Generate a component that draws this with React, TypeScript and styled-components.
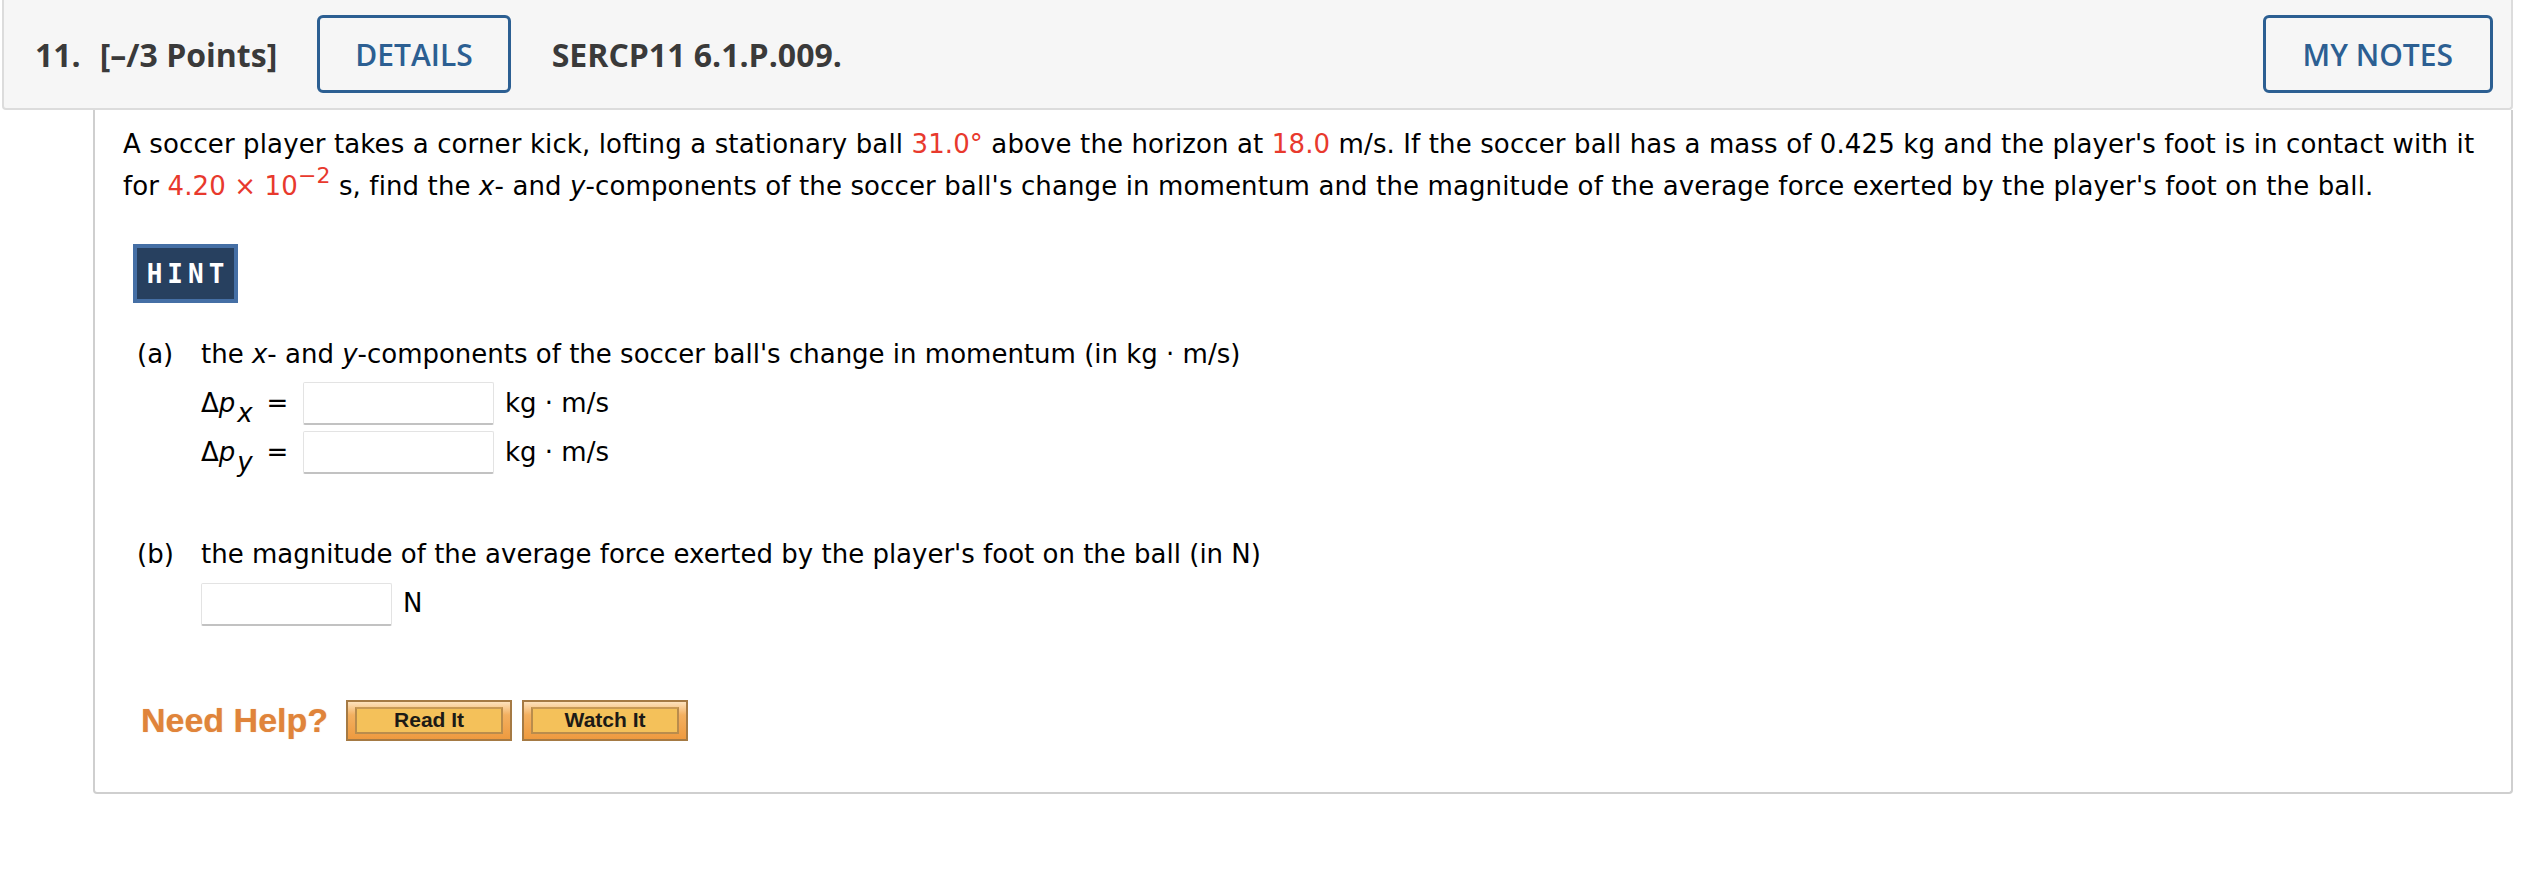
import React from 'react';
import styled, { createGlobalStyle } from 'styled-components';

const GlobalStyle = createGlobalStyle`
  html, body {
    margin: 0;
    padding: 0;
    background: #fff;
  }
`;

const App = () => {
  return (
    <>
      <GlobalStyle />
      <Page>
        <Header>
          <Number>11.</Number>
          <Points>[–/3 Points]</Points>
          <OutlineButton>DETAILS</OutlineButton>
          <Code>SERCP11 6.1.P.009.</Code>
          <Spacer />
          <OutlineButton $wide>MY NOTES</OutlineButton>
        </Header>
        <Panel>
          <Problem>
            A soccer player takes a corner kick, lofting a stationary ball <Red>31.0°</Red> above the horizon
            at <Red>18.0</Red> m/s. If the soccer ball has a mass of 0.425 kg and the player's foot is in contact
            with it for <Red>4.20 × 10<Sup>−2</Sup></Red> s, find the <i>x</i>- and <i>y</i>-components of the
            soccer ball's change in momentum and the magnitude of the average force exerted by the player's foot
            on the ball.
          </Problem>
          <HintButton>HINT</HintButton>

          <Part>
            <PartLabel>(a)</PartLabel>
            <PartBody>
              <PartText>
                the <i>x</i>- and <i>y</i>-components of the soccer ball's change in momentum (in kg · m/s)
              </PartText>
              <AnswerRows>
                <AnswerRow>
                  <Symbol>Δ<i>p</i><Sub>x</Sub></Symbol>
                  <Equals>=</Equals>
                  <AnswerInput type="text" />
                  <Unit>kg · m/s</Unit>
                </AnswerRow>
                <AnswerRow>
                  <Symbol>Δ<i>p</i><Sub>y</Sub></Symbol>
                  <Equals>=</Equals>
                  <AnswerInput type="text" />
                  <Unit>kg · m/s</Unit>
                </AnswerRow>
              </AnswerRows>
            </PartBody>
          </Part>

          <Part $gap={60}>
            <PartLabel>(b)</PartLabel>
            <PartBody>
              <PartText>the magnitude of the average force exerted by the player's foot on the ball (in N)</PartText>
              <AnswerRows>
                <AnswerRow>
                  <AnswerInput type="text" $flush />
                  <Unit>N</Unit>
                </AnswerRow>
              </AnswerRows>
            </PartBody>
          </Part>

          <HelpRow>
            <NeedHelp>Need Help?</NeedHelp>
            <HelpButton><HelpInner>Read It</HelpInner></HelpButton>
            <HelpButton><HelpInner>Watch It</HelpInner></HelpButton>
          </HelpRow>
        </Panel>
      </Page>
    </>
  );
};

const Page = styled.div`
  width: 2526px;
  font-family: 'DejaVu Sans', Verdana, sans-serif;
  color: #000;
`;

const Header = styled.div`
  display: flex;
  align-items: center;
  box-sizing: border-box;
  margin-left: 2px;
  width: 2511px;
  height: 110px;
  padding: 0 18px 0 31px;
  background: #f6f6f6;
  border: 2px solid #dcdcdc;
  border-top: none;
  border-radius: 0 0 4px 4px;
  font-family: 'Open Sans', 'Liberation Sans', sans-serif;
  color: #3a3a3a;
`;

const Number = styled.span`
  font-size: 32px;
  font-weight: 700;
  margin-right: 19px;
`;

const Points = styled.span`
  font-size: 32px;
  font-weight: 700;
  margin-right: 40px;
`;

const Code = styled.span`
  font-size: 32px;
  font-weight: 700;
  margin-left: 41px;
`;

const Spacer = styled.div`
  flex: 1;
`;

const OutlineButton = styled.button<{ $wide?: boolean }>`
  box-sizing: border-box;
  height: 78px;
  padding: 0 ${({ $wide }) => ($wide ? 37 : 35)}px;
  background: transparent;
  border: 3px solid #2c5f92;
  border-radius: 6px;
  color: #2c5f92;
  font-family: 'Open Sans', 'Liberation Sans', sans-serif;
  font-size: 30px;
  font-weight: 600;
  cursor: pointer;
`;

const Panel = styled.div`
  box-sizing: border-box;
  margin-left: 93px;
  width: 2420px;
  padding: 13px 22px 51px 28px;
  border: 2px solid #cfcfcf;
  border-top: none;
  border-radius: 0 0 4px 4px;
  font-size: 26px;
  line-height: 42px;
`;

const Problem = styled.p`
  margin: 0;
  padding-right: 2px;
  letter-spacing: 0.12px;
`;

const Red = styled.span`
  color: #e8392d;
`;

const Sup = styled.sup`
  font-size: 22px;
  line-height: 0;
  vertical-align: 12px;
`;

const HintButton = styled.button`
  display: block;
  box-sizing: border-box;
  margin: 37px 0 0 10px;
  width: 105px;
  height: 59px;
  padding: 0;
  background: #27405f;
  border: 4px solid #456fa5;
  color: #fff;
  font-family: 'DejaVu Sans Mono', monospace;
  font-size: 26px;
  font-weight: 700;
  letter-spacing: 5px;
  text-indent: 5px;
  cursor: pointer;
`;

const Part = styled.div<{ $gap?: number }>`
  display: flex;
  margin: ${({ $gap }) => $gap ?? 30}px 0 0 14px;
`;

const PartLabel = styled.div`
  width: 64px;
  flex-shrink: 0;
`;

const PartBody = styled.div`
  display: flex;
  flex-direction: column;
`;

const PartText = styled.div``;

const AnswerRows = styled.div`
  display: flex;
  flex-direction: column;
  gap: 7px;
  margin-top: 7px;
`;

const AnswerRow = styled.div`
  display: flex;
  align-items: center;
  height: 42px;
`;

const Symbol = styled.span`
  width: 61px;
  white-space: nowrap;
`;

const Sub = styled.sub`
  font-size: 26px;
  font-style: italic;
  line-height: 0;
  vertical-align: -10px;
  margin-left: 2px;
`;

const Equals = styled.span`
  width: 31px;
  text-align: center;
  margin-right: 10px;
`;

const AnswerInput = styled.input<{ $flush?: boolean }>`
  box-sizing: border-box;
  width: 191px;
  height: 43px;
  margin: ${({ $flush }) => ($flush ? '3px 0 0 0' : '0')};
  background: #fff;
  border: 1px solid #e3e3e3;
  border-bottom: 2px solid #c2c2c2;
  border-radius: 2px;
  font-size: 24px;
`;

const Unit = styled.span`
  margin-left: 11px;
`;

const HelpRow = styled.div`
  display: flex;
  align-items: center;
  gap: 10px;
  margin: 75px 0 0 18px;
`;

const NeedHelp = styled.span`
  margin-right: 8px;
  font-family: 'Liberation Sans', Arial, sans-serif;
  font-size: 34px;
  font-weight: 700;
  color: #e0843a;
  text-shadow: 0 0 1px rgba(224, 132, 58, 0.6);
`;

const HelpButton = styled.button`
  box-sizing: border-box;
  display: flex;
  width: 166px;
  height: 41px;
  padding: 5px 7px;
  background: linear-gradient(#fde2bd 0%, #f3b060 35%, #ee9a3f 100%);
  border: 2px solid #a57a44;
  cursor: pointer;
`;

const HelpInner = styled.span`
  flex: 1;
  display: flex;
  align-items: center;
  justify-content: center;
  background: #f4c15a;
  border: 2px solid #b98c4c;
  border-top-color: #c99a55;
  font-family: 'Liberation Sans', Arial, sans-serif;
  font-size: 21px;
  font-weight: 700;
  color: #1c1a16;
`;

export default App;
